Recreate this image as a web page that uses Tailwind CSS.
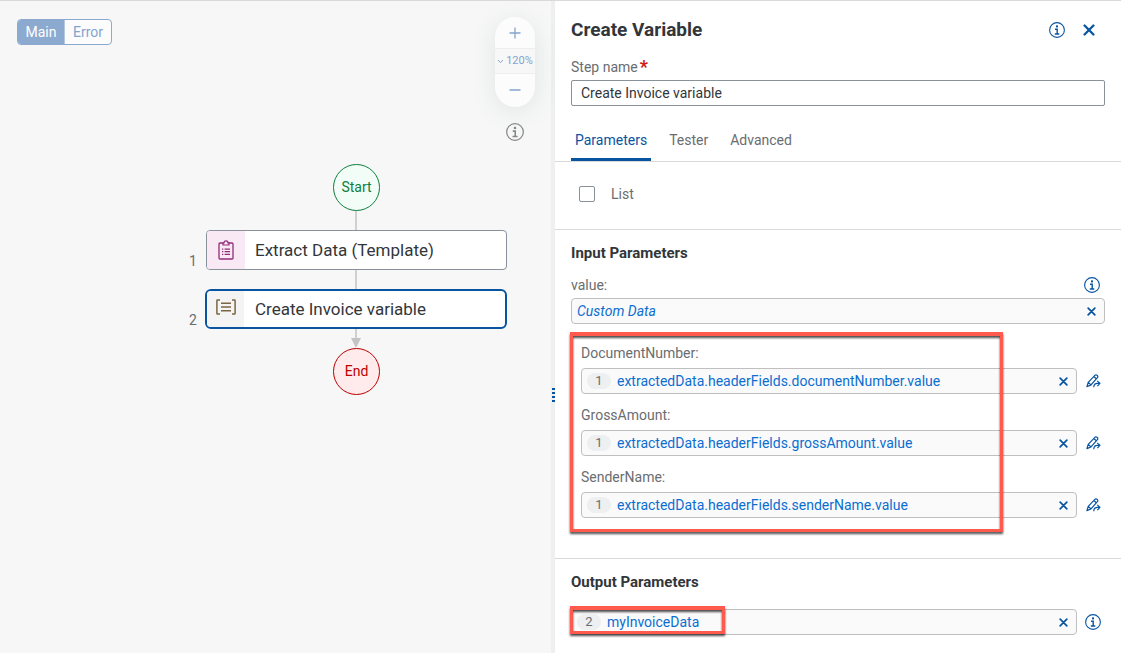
<!DOCTYPE html>
<html lang="en">
<head>
<meta charset="utf-8">
<title>Create Variable</title>
<script src="https://cdn.jsdelivr.net/npm/@tailwindcss/browser@4"></script>
</head>
<body class="bg-white font-[Roboto,'Liberation_Sans',sans-serif] text-sm text-[#32363a]">
<svg class="hidden">
  <symbol id="info" viewBox="0 0 16 16"><circle cx="8" cy="8" r="7.4" fill="none" stroke="currentColor" stroke-width="1.1"/><rect x="7" y="3.4" width="2" height="2" fill="currentColor"/><path d="M6 7.2H8.2V11.8M5.8 12H10.3" fill="none" stroke="currentColor" stroke-width="1.4"/></symbol>
  <symbol id="close" viewBox="0 0 10 10"><path d="M1.3 1.3L8.7 8.7M8.7 1.3L1.3 8.7" fill="none" stroke="currentColor" stroke-width="1.9" stroke-linecap="round"/></symbol>
  <symbol id="edit" viewBox="0 0 15 14"><path d="M.9 12.6L2.2 8.4L8.9 1.3Q9.9 .4 10.9 1.2L11.4 1.7Q12.2 2.7 11.4 3.7L5 10.9ZM2.3 8.4L5 10.9M7.9 2.5L10.3 4.8" fill="none" stroke="currentColor" stroke-width="1.2" stroke-linejoin="round"/><path d="M7.7 13.2Q8 9.4 11.4 9.4H13.4M11.2 6.9L13.9 9.4L11.4 12.2" fill="none" stroke="currentColor" stroke-width="1.2"/></symbol>
</svg>
<div class="flex min-h-screen border-t border-[#d9d9d9]">
  <main class="relative flex-[551] bg-[#f7f7f7]">
    <div class="absolute left-[17px] top-[18px] flex h-[26px] overflow-hidden rounded border border-[#8caad0] bg-[#fcfcfc]">
      <button class="w-[46px] bg-[#8caad0] text-white">Main</button>
      <button class="w-[47px] border-l border-[#b5c8e0] text-[#84a4cd]">Error</button>
    </div>

    <div class="absolute right-4 top-4 flex h-[90px] w-10 flex-col overflow-hidden rounded-[20px] bg-[#fcfcfc] text-[#84a4cd] shadow-[0_4px_24px_rgba(90,110,110,0.14)]">
      <button class="flex flex-1 items-center justify-center" aria-label="Zoom in"><svg class="size-3" viewBox="0 0 12 12"><path d="M6 .5V11.5M.5 6H11.5" stroke="currentColor" stroke-width="1.3"/></svg></button>
      <button class="flex h-[26px] items-center justify-center gap-0.5 border-y border-[#eeeeee] bg-[#f7f7f7] text-[11px]"><svg class="w-[7px]" viewBox="0 0 7 5"><path d="M1 1L3.5 3.6L6 1" fill="none" stroke="currentColor"/></svg>120%</button>
      <button class="flex flex-1 items-center justify-center pb-0.5" aria-label="Zoom out"><svg class="size-3" viewBox="0 0 12 12"><path d="M.5 6H11.5" stroke="currentColor" stroke-width="1.3"/></svg></button>
    </div>
    <button class="absolute right-[27px] top-[122px] text-[#85888a]" aria-label="Information"><svg class="size-[18px]"><use href="#info"/></svg></button>

    <div class="absolute left-[355px] top-[209px] h-[130px] w-0.5 bg-[#d0d0d0]"></div>
    <svg class="absolute left-[351px] top-[337px] h-[10px] w-[10px]" viewBox="0 0 10 10"><path d="M0 0H10L5 10Z" fill="#c4c4c4"/></svg>
    <div class="absolute left-[333px] top-[163px] flex size-[47px] items-center justify-center rounded-full border border-[#107e3e] bg-[#f1fdf6] pb-0.5 text-[#107e3e]">Start</div>
    <div class="absolute left-[189px] top-[250px] text-[#6a6d70]">1</div>
    <div class="absolute left-[206px] top-[229px] flex h-10 w-[301px] items-center overflow-hidden rounded border border-[#89919a] bg-white">
      <div class="flex h-full w-[38px] items-center justify-center bg-[#f9e9f5] text-[#932b79]">
        <svg class="h-5 w-4" viewBox="0 0 16 20"><rect x="1" y="3" width="14" height="16" rx="1" fill="none" stroke="currentColor" stroke-width="1.3"/><path d="M5 5V3H6Q6 .8 8 .8Q10 .8 10 3H11V5Z" fill="#f9e9f5" stroke="currentColor" stroke-width="1.2"/><path d="M4 9.1H5.3M4 11.7H5.3M4 14.3H5.3M6.6 9.1H12M6.6 11.7H12M6.6 14.3H12" stroke="currentColor" stroke-width="1.3"/></svg>
      </div>
      <span class="pl-[10px] text-[17px]">Extract Data (Template)</span>
    </div>
    <div class="absolute left-[189px] top-[309px] text-[#6a6d70]">2</div>
    <div class="absolute left-[205px] top-[288px] flex h-10 w-[302px] items-center overflow-hidden rounded-md border-2 border-[#0854a0] bg-white">
      <div class="flex h-full w-[37px] items-center justify-center bg-[#f4f4f4] text-[#7b6545]">
        <svg class="mb-1 h-4 w-5" viewBox="0 0 20 16"><path d="M4 1H1.5Q.9 1 .9 1.6V14.4Q.9 15 1.5 15H4M16 1H18.5Q19.1 1 19.1 1.6V14.4Q19.1 15 18.5 15H16M5 4.2H15M5 8H15M5 11.8H15" fill="none" stroke="currentColor" stroke-width="1.5"/></svg>
      </div>
      <span class="pl-[11px] text-[17px]">Create Invoice variable</span>
    </div>
    <div class="absolute left-[333px] top-[347px] flex size-[47px] items-center justify-center rounded-full border border-[#bb0000] bg-[#ffebeb] pb-0.5 text-[#bb0000]">End</div>
  </main>

  <div class="flex w-1 flex-col items-center justify-center bg-[#edeff0]">
    <svg class="mt-[136px] h-[14px] w-[3px]" viewBox="0 0 3 14" fill="#0854a0"><path d="M0 0H3V2H0ZM0 4H3V6H0ZM0 8H3V10H0ZM0 12H3V14H0Z"/></svg>
  </div>

  <aside class="flex-[566]">
    <header class="flex h-[58px] items-center px-4">
      <h1 class="flex-1 text-[19px] font-bold">Create Variable</h1>
      <button class="mr-[18px] text-[#0854a0]" aria-label="Information"><svg class="size-4"><use href="#info"/></svg></button>
      <button class="mr-[10px] text-[#0854a0]" aria-label="Close"><svg class="size-3"><use href="#close"/></svg></button>
    </header>
    <div class="flex flex-col gap-[5px] px-4">
      <label for="step" class="flex h-4 gap-0.5 leading-4 text-[#6a6d70]">Step name<span class="text-lg leading-4 font-bold text-[#cc1919]">*</span></label>
      <input id="step" class="h-[26px] w-full rounded-xs border border-[#89919a] px-[9px]" value="Create Invoice variable">
    </div>
    <nav class="mt-[13px] flex gap-[14px] border-b border-[#d9d9d9] px-4 text-[#6a6d70]">
      <button class="h-[42px] border-y-3 border-t-transparent border-b-[#0854a0] px-1 text-[#0854a0]">Parameters</button>
      <button class="h-[42px] px-1">Tester</button>
      <button class="h-[42px] px-1">Advanced</button>
    </nav>
    <section class="flex items-center border-b border-[#d9d9d9] px-6 pt-6 pb-[27px]">
      <input id="list" type="checkbox" class="size-4 appearance-none rounded-xs border border-[#89919a]">
      <label for="list" class="pl-4 leading-4 text-[#6a6d70]">List</label>
    </section>
    <section class="border-b border-[#d9d9d9] px-4 pt-[13px] pb-[26px]">
      <h2 class="text-[15px] leading-5 font-bold">Input Parameters</h2>
      <div class="mt-[14px] flex justify-between leading-4 text-[#6a6d70]">
        <label for="value">value:</label>
        <button class="mr-[5px] text-[#0854a0]" aria-label="Value information"><svg class="size-4"><use href="#info"/></svg></button>
      </div>
      <div class="mt-[5px] flex h-[26px] items-center rounded border border-[#bfbfbf] bg-[#fafafa] px-[5px]">
        <input id="value" class="min-w-0 flex-1 text-[#0a6ed1] italic" value="Custom Data">
        <button class="px-[3px] text-[#0854a0]" aria-label="Clear value"><svg class="size-[9px]"><use href="#close"/></svg></button>
      </div>
      <div class="relative mt-2 flex flex-col gap-[13px] pt-[13px] pb-[14px] pl-[10px]">
        <div>
          <label for="doc" class="block leading-4 text-[#6a6d70]">DocumentNumber:</label>
          <div class="mt-[7px] flex items-center gap-[9px]">
            <div class="flex h-[26px] flex-1 items-center rounded border border-[#bfbfbf] bg-[#fafafa] px-[5px]">
              <span class="w-6 rounded-full bg-[#edeff0] text-center text-[13px] leading-4 text-[#6a6d70]">1</span>
              <input id="doc" class="ml-[6px] min-w-0 flex-1 text-[#0a6ed1]" value="extractedData.headerFields.documentNumber.value">
              <button class="px-[3px] text-[#0854a0]" aria-label="Clear DocumentNumber"><svg class="size-[9px]"><use href="#close"/></svg></button>
            </div>
            <button class="mr-1 text-[#0854a0]" aria-label="Edit DocumentNumber"><svg class="h-[14px] w-[15px]"><use href="#edit"/></svg></button>
          </div>
        </div>
        <div>
          <label for="gross" class="block leading-4 text-[#6a6d70]">GrossAmount:</label>
          <div class="mt-[7px] flex items-center gap-[9px]">
            <div class="flex h-[26px] flex-1 items-center rounded border border-[#bfbfbf] bg-[#fafafa] px-[5px]">
              <span class="w-6 rounded-full bg-[#edeff0] text-center text-[13px] leading-4 text-[#6a6d70]">1</span>
              <input id="gross" class="ml-[6px] min-w-0 flex-1 text-[#0a6ed1]" value="extractedData.headerFields.grossAmount.value">
              <button class="px-[3px] text-[#0854a0]" aria-label="Clear GrossAmount"><svg class="size-[9px]"><use href="#close"/></svg></button>
            </div>
            <button class="mr-1 text-[#0854a0]" aria-label="Edit GrossAmount"><svg class="h-[14px] w-[15px]"><use href="#edit"/></svg></button>
          </div>
        </div>
        <div>
          <label for="sender" class="block leading-4 text-[#6a6d70]">SenderName:</label>
          <div class="mt-[7px] flex items-center gap-[9px]">
            <div class="flex h-[26px] flex-1 items-center rounded border border-[#bfbfbf] bg-[#fafafa] px-[5px]">
              <span class="w-6 rounded-full bg-[#edeff0] text-center text-[13px] leading-4 text-[#6a6d70]">1</span>
              <input id="sender" class="ml-[6px] min-w-0 flex-1 text-[#0a6ed1]" value="extractedData.headerFields.senderName.value">
              <button class="px-[3px] text-[#0854a0]" aria-label="Clear SenderName"><svg class="size-[9px]"><use href="#close"/></svg></button>
            </div>
            <button class="mr-1 text-[#0854a0]" aria-label="Edit SenderName"><svg class="h-[14px] w-[15px]"><use href="#edit"/></svg></button>
          </div>
        </div>
        <div class="pointer-events-none absolute inset-y-0 -left-px w-[433px] border-3 border-t-4 border-[#ff5a4d] drop-shadow-[0_2px_1px_rgba(0,0,0,0.7)]"></div>
      </div>
    </section>
    <section class="px-4 pt-[13px]">
      <h2 class="text-[15px] leading-5 font-bold">Output Parameters</h2>
      <div class="relative mt-[17px] flex items-center gap-2">
        <div class="flex h-[26px] flex-1 items-center rounded border border-[#bfbfbf] bg-[#fafafa] px-[5px]">
          <span class="w-6 rounded-full bg-[#edeff0] text-center text-[13px] leading-4 text-[#6a6d70]">2</span>
          <input aria-label="Output parameter" class="ml-[6px] min-w-0 flex-1 text-[#0a6ed1]" value="myInvoiceData">
          <button class="px-[3px] text-[#0854a0]" aria-label="Clear output"><svg class="size-[9px]"><use href="#close"/></svg></button>
        </div>
        <button class="mr-1 text-[#0854a0]" aria-label="Output information"><svg class="size-4"><use href="#info"/></svg></button>
        <div class="pointer-events-none absolute -top-[3px] -left-px h-7 w-[155px] border-3 border-t-4 border-[#ff5a4d] drop-shadow-[0_2px_1px_rgba(0,0,0,0.7)]"></div>
      </div>
    </section>
  </aside>
</div>
</body>
</html>
